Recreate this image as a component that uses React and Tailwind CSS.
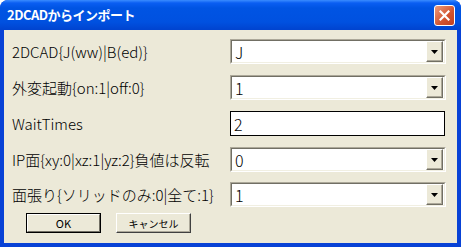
import React from "react";

const font = { fontFamily: '"Noto Sans CJK JP", "Liberation Sans", sans-serif' };

function DropBtn() {
  return (
    <div className="flex h-[21px] w-[17px] items-center justify-center border border-t-white border-l-white border-r-[#716F64] border-b-[#716F64] bg-[#ECE9D8] pt-[1px] shadow-[inset_-1px_-1px_0_#ACA899]">
      <svg width="7" height="4" viewBox="0 0 7 4"><path d="M0 0h7L3.5 4z" fill="#000" /></svg>
    </div>
  );
}

function Combo({ value }) {
  return (
    <div className="flex h-[25px] w-[216px] items-center border border-t-[#ACA899] border-l-[#ACA899] border-r-white border-b-white">
      <div className="flex h-full flex-1 items-center border border-t-[#716F64] border-l-[#716F64] border-r-[#F1EFE2] border-b-[#F1EFE2] bg-white pr-[1px]">
        <span className="flex-1 pl-[3px] text-[16px] font-light leading-none text-black">{value}</span>
        <DropBtn />
      </div>
    </div>
  );
}

function Row({ label, children }) {
  return (
    <div className="flex h-[25px] items-center">
      <div className="w-[226px] whitespace-nowrap pl-[8px] text-[15px] font-light leading-none text-black">{label}</div>
      {children}
    </div>
  );
}

export default function App() {
  return (
    <div className="h-[247px] w-[461px] bg-white" style={font}>
      <div className="flex h-full w-full flex-col overflow-hidden rounded-t-[8px] bg-[#0842D6]">
        <div className="flex h-[30px] items-center justify-between bg-[linear-gradient(#3A8CFF_0px,#0A5EF2_3px,#0054E3_8px,#0051E0_22px,#0043CF_30px)] pl-[7px] pr-[6px]">
          <span className="text-[13px] font-bold tracking-[-0.5px] text-white">2DCADからインポート</span>
          <div className="flex h-[21px] w-[21px] items-center justify-center rounded-[3px] border border-white bg-[linear-gradient(135deg,#EC9B7C,#D2532F_60%,#C1401F)]">
            <svg width="11" height="11" viewBox="0 0 11 11"><path d="M1.5 1.5l8 8M9.5 1.5l-8 8" stroke="#fff" strokeWidth="2.2" strokeLinecap="square" /></svg>
          </div>
        </div>
        <div className="mx-[4px] mb-[4px] flex flex-1 flex-col gap-[11px] bg-[#ECE9D8] pt-[9px]">
          <Row label="2DCAD{J(ww)|B(ed)}"><Combo value="J" /></Row>
          <Row label="外変起動{on:1|off:0}"><Combo value="1" /></Row>
          <Row label="WaitTimes">
            <div className="flex h-[25px] w-[215px] items-center border border-black bg-white pl-[3px] text-[16px] font-light leading-none">2</div>
          </Row>
          <Row label="IP面{xy:0|xz:1|yz:2}負値は反転"><Combo value="0" /></Row>
          <div className="-mt-[1px]">
            <Row label="面張り{ソリッドのみ:0|全て:1}"><Combo value="1" /></Row>
          </div>
          <div className="-mt-[5px] flex gap-[15px] pl-[22px]">
            <div className="border border-black">
              <div className="flex h-[18px] w-[73px] items-center justify-center border border-t-white border-l-white border-r-[#716F64] border-b-[#716F64] bg-[#ECE9D8] text-[11px] text-black">OK</div>
            </div>
            <div className="flex h-[20px] w-[75px] items-center justify-center border border-t-white border-l-white border-r-[#404040] border-b-[#404040] bg-[#ECE9D8] text-[10px] text-black shadow-[inset_-1px_-1px_0_#ACA899]">キャンセル</div>
          </div>
        </div>
      </div>
    </div>
  );
}
